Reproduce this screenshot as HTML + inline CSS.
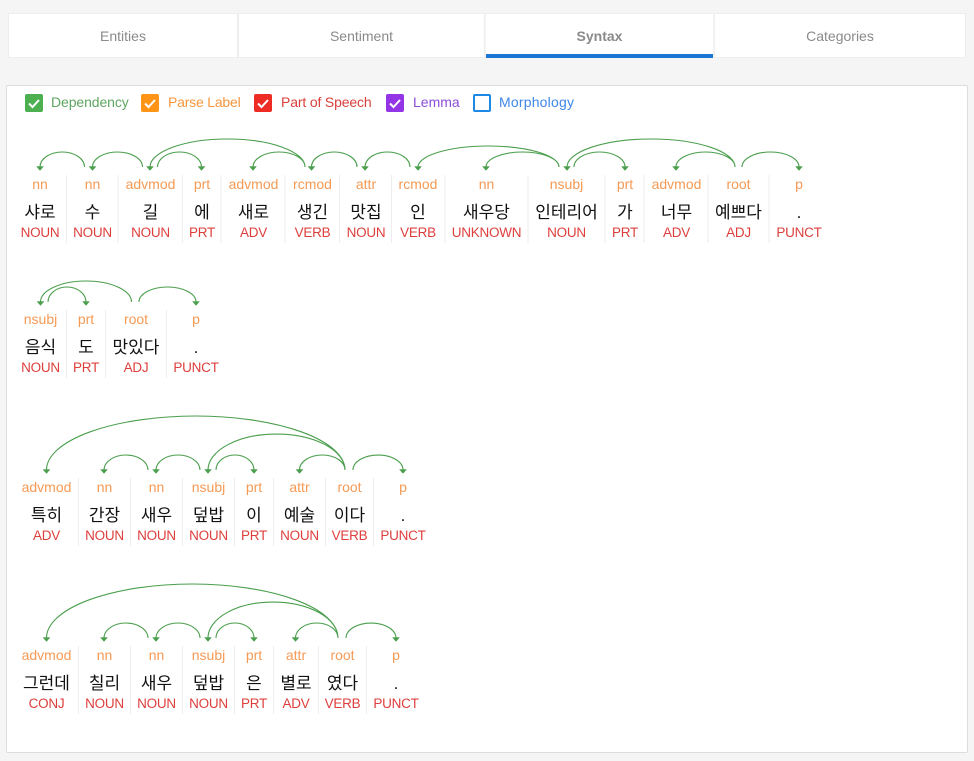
<!DOCTYPE html>
<html><head><meta charset="utf-8"><style>
html,body{margin:0;padding:0;background:#f5f5f5;width:974px;height:761px;overflow:hidden;font-family:"Liberation Sans",Arial,sans-serif}
.tab{position:absolute;top:13px;height:43px;background:#fff;border:1px solid #eeeeee;box-sizing:content-box;text-align:center;line-height:44px;font-size:14px;color:#8a8a8a}
.panel{position:absolute;left:6px;top:85px;width:960px;height:666px;background:#fff;border:1px solid #dddddd;border-radius:2px}
.cb{position:absolute;top:94px;width:18px;height:18px;border-radius:2px}
.cl{position:absolute;top:94px;line-height:17px;font-size:14px;white-space:nowrap}
svg.d{position:absolute;left:0;top:0}
.a{fill:none;stroke:#4a9e4c;stroke-width:1.1}
.h{fill:#4a9e4c;stroke:#4a9e4c;stroke-width:.4}
.s{stroke:#eeeeee;stroke-width:1}
text{text-anchor:middle}
.l{font-size:14px;fill:#f59a55;font-family:"Liberation Sans",sans-serif}
.w{font-size:17px;fill:#111;font-family:"Liberation Sans","Noto Sans CJK KR",sans-serif;transform:translateY(1px)}
.p{font-size:13.5px;letter-spacing:-.25px;fill:#dd3f3c;font-family:"Liberation Sans",sans-serif}
</style></head><body>
<div class="tab" style="left:8px;width:228px">Entities</div>
<div class="tab" style="left:238px;width:245px">Sentiment</div>
<div class="tab" style="left:486px;width:227px;font-weight:bold;height:40px;border-left:0;border-right:0;border-bottom:4px solid #1976d2">Syntax</div>
<div class="tab" style="left:714px;width:250px">Categories</div>
<div class="panel"></div>
<svg class="cb" style="left:25px;background:#4caf50" viewBox="0 0 18 18"><path d="M4 9.5l3.5 3.5L14 6" fill="none" stroke="#fff" stroke-width="2"/></svg>
<div class="cl" style="left:51px;color:#5fa560;letter-spacing:-.1px">Dependency</div>
<svg class="cb" style="left:141px;background:#ff9416" viewBox="0 0 18 18"><path d="M4 9.5l3.5 3.5L14 6" fill="none" stroke="#fff" stroke-width="2"/></svg>
<div class="cl" style="left:168px;color:#f7963f;letter-spacing:-.2px">Parse Label</div>
<svg class="cb" style="left:254px;background:#ee2b24" viewBox="0 0 18 18"><path d="M4 9.5l3.5 3.5L14 6" fill="none" stroke="#fff" stroke-width="2"/></svg>
<div class="cl" style="left:281px;color:#d9403c;letter-spacing:-.15px">Part of Speech</div>
<svg class="cb" style="left:386px;background:#9334e6" viewBox="0 0 18 18"><path d="M4 9.5l3.5 3.5L14 6" fill="none" stroke="#fff" stroke-width="2"/></svg>
<div class="cl" style="left:413px;color:#8c4fd8">Lemma</div>
<div class="cb" style="left:473px;box-sizing:border-box;border:2px solid #1e88e5"></div>
<div class="cl" style="left:499px;color:#3f86e8;letter-spacing:.2px">Morphology</div>

<svg class="d" width="974" height="761" viewBox="0 0 974 761">
<g>
<path class="s" d="M66.5 175V243M118 175V243M182.5 175V243M221 175V243M285 175V243M339.5 175V243M391.5 175V243M445 175V243M528 175V243M605 175V243M644 175V243M708 175V243M769 175V243"/>
<path class="a" d="M84.5 167A22.25 15 0 0 0 40 167M142.5 167A25 15 0 0 0 92.5 167M305 167A77.5 28 0 0 0 150 167M157.5 167A22 15 0 0 1 201.5 167M305 167A26 15 0 0 0 253 167M357 167A22.75 15 0 0 0 311.5 167M410 167A22.5 15 0 0 0 365 167M559 167A70.5 21 0 0 0 418 167M559 167A36.5 15 0 0 0 486 167M735 167A84 28 0 0 0 567 167M574 167A25.5 15 0 0 1 625 167M735 167A29.5 15 0 0 0 676 167M742 167A28.5 15 0 0 1 799 167"/>
<path class="h" d="M36.5 166.5h7l-3.5 4zM89 166.5h7l-3.5 4zM146.5 166.5h7l-3.5 4zM198 166.5h7l-3.5 4zM249.5 166.5h7l-3.5 4zM308 166.5h7l-3.5 4zM361.5 166.5h7l-3.5 4zM414.5 166.5h7l-3.5 4zM482.5 166.5h7l-3.5 4zM563.5 166.5h7l-3.5 4zM621.5 166.5h7l-3.5 4zM672.5 166.5h7l-3.5 4zM795.5 166.5h7l-3.5 4z"/>
<text class="l" x="40" y="189">nn</text><text class="w" x="40" y="217">샤로</text><text class="p" x="40" y="237">NOUN</text>
<text class="l" x="92.5" y="189">nn</text><text class="w" x="92.5" y="217">수</text><text class="p" x="92.5" y="237">NOUN</text>
<text class="l" x="150.5" y="189">advmod</text><text class="w" x="150.5" y="217">길</text><text class="p" x="150.5" y="237">NOUN</text>
<text class="l" x="202" y="189">prt</text><text class="w" x="202" y="217">에</text><text class="p" x="202" y="237">PRT</text>
<text class="l" x="253.5" y="189">advmod</text><text class="w" x="253.5" y="217">새로</text><text class="p" x="253.5" y="237">ADV</text>
<text class="l" x="312.5" y="189">rcmod</text><text class="w" x="312.5" y="217">생긴</text><text class="p" x="312.5" y="237">VERB</text>
<text class="l" x="366" y="189">attr</text><text class="w" x="366" y="217">맛집</text><text class="p" x="366" y="237">NOUN</text>
<text class="l" x="418" y="189">rcmod</text><text class="w" x="418" y="217">인</text><text class="p" x="418" y="237">VERB</text>
<text class="l" x="486.5" y="189">nn</text><text class="w" x="486.5" y="217">새우당</text><text class="p" x="486.5" y="237">UNKNOWN</text>
<text class="l" x="566.5" y="189">nsubj</text><text class="w" x="566.5" y="217">인테리어</text><text class="p" x="566.5" y="237">NOUN</text>
<text class="l" x="625" y="189">prt</text><text class="w" x="625" y="217">가</text><text class="p" x="625" y="237">PRT</text>
<text class="l" x="676.5" y="189">advmod</text><text class="w" x="676.5" y="217">너무</text><text class="p" x="676.5" y="237">ADV</text>
<text class="l" x="738.5" y="189">root</text><text class="w" x="738.5" y="217">예쁘다</text><text class="p" x="738.5" y="237">ADJ</text>
<text class="l" x="799" y="189">p</text><text class="w" x="799" y="217">.</text><text class="p" x="799" y="237">PUNCT</text>
</g>
<g transform="translate(0 135)">
<path class="s" d="M66.5 175V243M105.5 175V243M166.5 175V243"/>
<path class="a" d="M131.5 167A45.5 21 0 0 0 40.5 167M48 167A19 15 0 0 1 86 167M139 167A28.5 15 0 0 1 196 167"/>
<path class="h" d="M37 166.5h7l-3.5 4zM82.5 166.5h7l-3.5 4zM192.5 166.5h7l-3.5 4z"/>
<text class="l" x="40.5" y="189">nsubj</text><text class="w" x="40.5" y="217">음식</text><text class="p" x="40.5" y="237">NOUN</text>
<text class="l" x="86" y="189">prt</text><text class="w" x="86" y="217">도</text><text class="p" x="86" y="237">PRT</text>
<text class="l" x="136" y="189">root</text><text class="w" x="136" y="217">맛있다</text><text class="p" x="136" y="237">ADJ</text>
<text class="l" x="196" y="189">p</text><text class="w" x="196" y="217">.</text><text class="p" x="196" y="237">PUNCT</text>
</g>
<g transform="translate(0 303)">
<path class="s" d="M78.5 175V243M130.5 175V243M182.5 175V243M234.5 175V243M273.5 175V243M325.5 175V243M373.5 175V243"/>
<path class="a" d="M345 167A149.25 54 0 0 0 46.5 167M345 167A68.5 36 0 0 0 208 167M148 167A22 15 0 0 0 104 167M200 167A22 15 0 0 0 156 167M216 167A19 15 0 0 1 254 167M345 167A22.75 15 0 0 0 299.5 167M353 167A25 15 0 0 1 403 167"/>
<path class="h" d="M43 166.5h7l-3.5 4zM100.5 166.5h7l-3.5 4zM152.5 166.5h7l-3.5 4zM204.5 166.5h7l-3.5 4zM250.5 166.5h7l-3.5 4zM296 166.5h7l-3.5 4zM399.5 166.5h7l-3.5 4z"/>
<text class="l" x="46.5" y="189">advmod</text><text class="w" x="46.5" y="217">특히</text><text class="p" x="46.5" y="237">ADV</text>
<text class="l" x="104.5" y="189">nn</text><text class="w" x="104.5" y="217">간장</text><text class="p" x="104.5" y="237">NOUN</text>
<text class="l" x="156.5" y="189">nn</text><text class="w" x="156.5" y="217">새우</text><text class="p" x="156.5" y="237">NOUN</text>
<text class="l" x="208.5" y="189">nsubj</text><text class="w" x="208.5" y="217">덮밥</text><text class="p" x="208.5" y="237">NOUN</text>
<text class="l" x="254" y="189">prt</text><text class="w" x="254" y="217">이</text><text class="p" x="254" y="237">PRT</text>
<text class="l" x="299.5" y="189">attr</text><text class="w" x="299.5" y="217">예술</text><text class="p" x="299.5" y="237">NOUN</text>
<text class="l" x="349.5" y="189">root</text><text class="w" x="349.5" y="217">이다</text><text class="p" x="349.5" y="237">VERB</text>
<text class="l" x="403" y="189">p</text><text class="w" x="403" y="217">.</text><text class="p" x="403" y="237">PUNCT</text>
</g>
<g transform="translate(0 471)">
<path class="s" d="M78.5 175V243M130.5 175V243M182.5 175V243M234.5 175V243M273.5 175V243M318.5 175V243M366.5 175V243"/>
<path class="a" d="M338 167A145.75 54 0 0 0 46.5 167M338 167A65 36 0 0 0 208 167M148 167A22 15 0 0 0 104 167M200 167A22 15 0 0 0 156 167M216 167A19 15 0 0 1 254 167M338 167A21.25 15 0 0 0 295.5 167M346 167A25 15 0 0 1 396 167"/>
<path class="h" d="M43 166.5h7l-3.5 4zM100.5 166.5h7l-3.5 4zM152.5 166.5h7l-3.5 4zM204.5 166.5h7l-3.5 4zM250.5 166.5h7l-3.5 4zM292 166.5h7l-3.5 4zM392.5 166.5h7l-3.5 4z"/>
<text class="l" x="46.5" y="189">advmod</text><text class="w" x="46.5" y="217">그런데</text><text class="p" x="46.5" y="237">CONJ</text>
<text class="l" x="104.5" y="189">nn</text><text class="w" x="104.5" y="217">칠리</text><text class="p" x="104.5" y="237">NOUN</text>
<text class="l" x="156.5" y="189">nn</text><text class="w" x="156.5" y="217">새우</text><text class="p" x="156.5" y="237">NOUN</text>
<text class="l" x="208.5" y="189">nsubj</text><text class="w" x="208.5" y="217">덮밥</text><text class="p" x="208.5" y="237">NOUN</text>
<text class="l" x="254" y="189">prt</text><text class="w" x="254" y="217">은</text><text class="p" x="254" y="237">PRT</text>
<text class="l" x="296" y="189">attr</text><text class="w" x="296" y="217">별로</text><text class="p" x="296" y="237">ADV</text>
<text class="l" x="342.5" y="189">root</text><text class="w" x="342.5" y="217">였다</text><text class="p" x="342.5" y="237">VERB</text>
<text class="l" x="396" y="189">p</text><text class="w" x="396" y="217">.</text><text class="p" x="396" y="237">PUNCT</text>
</g>
</svg>
</body></html>
